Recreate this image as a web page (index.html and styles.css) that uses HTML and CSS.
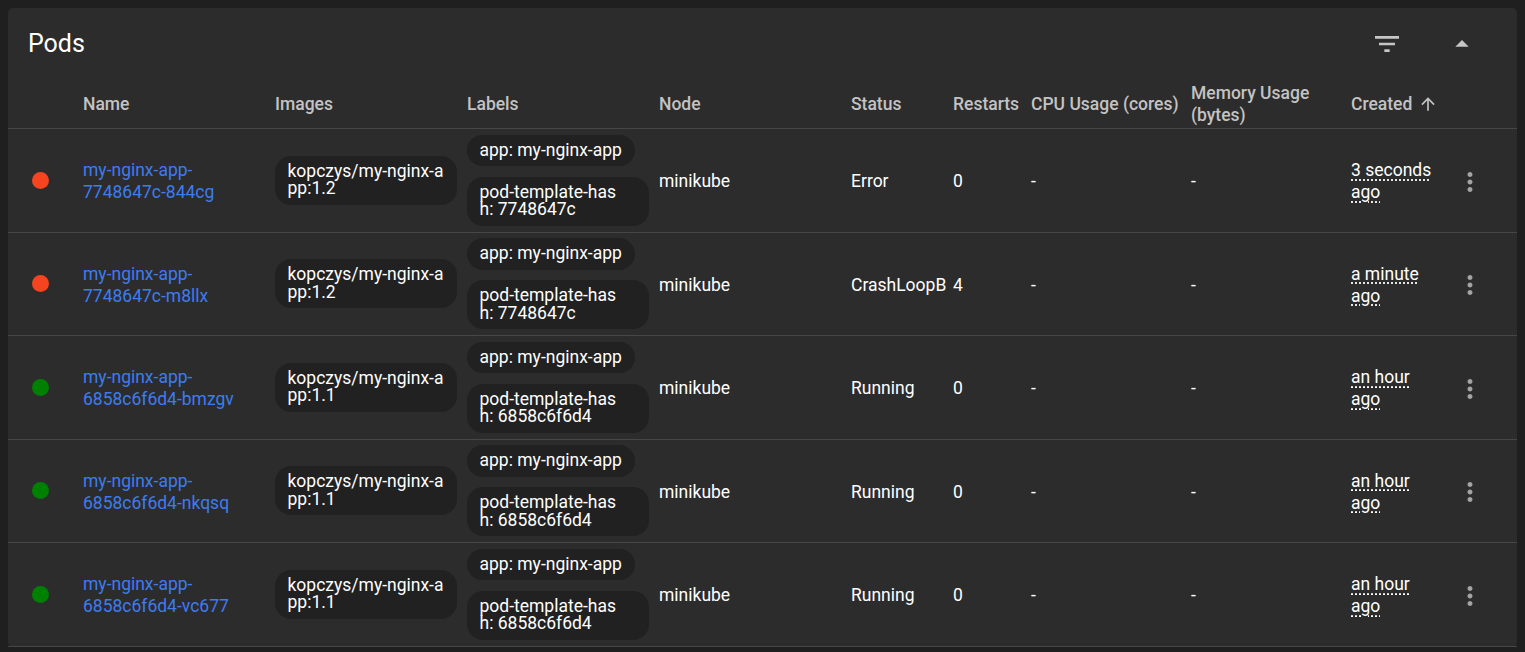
FILE: index.html
```html
<!DOCTYPE html>
<html lang="en">
<head>
<meta charset="utf-8">
<title>Pods</title>
<link rel="stylesheet" href="styles.css">
</head>
<body>
<section class="card">
  <header class="card-head">
    <h1 class="title">Pods</h1>
    <div class="head-actions">
      <button class="icon-btn" aria-label="Filter">
        <svg viewBox="0 0 24 24" width="32" height="32"><path fill="currentColor" d="M10 18h4v-2h-4v2zM3 6v2h18V6H3zm3 7h12v-2H6v2z"/></svg>
      </button>
      <button class="icon-btn" aria-label="Collapse">
        <svg viewBox="0 0 24 24" width="32" height="32"><path fill="currentColor" d="M7 14l5-5 5 5z"/></svg>
      </button>
    </div>
  </header>

  <div class="table">
    <div class="row row--head">
      <div class="cell"></div>
      <div class="cell">Name</div>
      <div class="cell">Images</div>
      <div class="cell">Labels</div>
      <div class="cell">Node</div>
      <div class="cell">Status</div>
      <div class="cell">Restarts</div>
      <div class="cell">CPU Usage (cores)</div>
      <div class="cell cell--wrap">Memory Usage (bytes)</div>
      <div class="cell cell--sort">Created
        <svg class="sort-icon" viewBox="0 0 24 24" width="20" height="20"><path fill="currentColor" d="M4 12l1.41 1.41L11 7.83V20h2V7.83l5.58 5.59L20 12l-8-8-8 8z"/></svg>
      </div>
      <div class="cell"></div>
    </div>

    <div class="row">
      <div class="cell cell--dot"><span class="dot dot--error"></span></div>
      <div class="cell cell--text cell--name"><a class="link" href="#">my-nginx-app-7748647c-844cg</a></div>
      <div class="cell"><span class="chip chip--image">kopczys/my-nginx-app:1.2</span></div>
      <div class="cell cell--labels"><span class="chip">app: my-nginx-app</span><span class="chip chip--hash">pod-template-hash: 7748647c</span></div>
      <div class="cell cell--text">minikube</div>
      <div class="cell cell--text cell--status">Error</div>
      <div class="cell cell--text">0</div>
      <div class="cell cell--text">-</div>
      <div class="cell cell--text">-</div>
      <div class="cell cell--text cell--created"><span class="time">3 seconds ago</span></div>
      <div class="cell cell--action"><button class="icon-btn kebab" aria-label="More"><svg viewBox="0 0 24 24" width="30" height="30"><path fill="currentColor" d="M12 8c1.1 0 2-.9 2-2s-.9-2-2-2-2 .9-2 2 .9 2 2 2zm0 2c-1.1 0-2 .9-2 2s.9 2 2 2 2-.9 2-2-.9-2-2-2zm0 6c-1.1 0-2 .9-2 2s.9 2 2 2 2-.9 2-2-.9-2-2-2z"/></svg></button></div>
    </div>

    <div class="row">
      <div class="cell cell--dot"><span class="dot dot--error"></span></div>
      <div class="cell cell--text cell--name"><a class="link" href="#">my-nginx-app-7748647c-m8llx</a></div>
      <div class="cell"><span class="chip chip--image">kopczys/my-nginx-app:1.2</span></div>
      <div class="cell cell--labels"><span class="chip">app: my-nginx-app</span><span class="chip chip--hash">pod-template-hash: 7748647c</span></div>
      <div class="cell cell--text">minikube</div>
      <div class="cell cell--text cell--status">CrashLoopBackOff</div>
      <div class="cell cell--text">4</div>
      <div class="cell cell--text">-</div>
      <div class="cell cell--text">-</div>
      <div class="cell cell--text cell--created"><span class="time">a minute ago</span></div>
      <div class="cell cell--action"><button class="icon-btn kebab" aria-label="More"><svg viewBox="0 0 24 24" width="30" height="30"><path fill="currentColor" d="M12 8c1.1 0 2-.9 2-2s-.9-2-2-2-2 .9-2 2 .9 2 2 2zm0 2c-1.1 0-2 .9-2 2s.9 2 2 2 2-.9 2-2-.9-2-2-2zm0 6c-1.1 0-2 .9-2 2s.9 2 2 2 2-.9 2-2-.9-2-2-2z"/></svg></button></div>
    </div>

    <div class="row">
      <div class="cell cell--dot"><span class="dot dot--ok"></span></div>
      <div class="cell cell--text cell--name"><a class="link" href="#">my-nginx-app-6858c6f6d4-bmzgv</a></div>
      <div class="cell"><span class="chip chip--image">kopczys/my-nginx-app:1.1</span></div>
      <div class="cell cell--labels"><span class="chip">app: my-nginx-app</span><span class="chip chip--hash">pod-template-hash: 6858c6f6d4</span></div>
      <div class="cell cell--text">minikube</div>
      <div class="cell cell--text cell--status">Running</div>
      <div class="cell cell--text">0</div>
      <div class="cell cell--text">-</div>
      <div class="cell cell--text">-</div>
      <div class="cell cell--text cell--created"><span class="time">an hour ago</span></div>
      <div class="cell cell--action"><button class="icon-btn kebab" aria-label="More"><svg viewBox="0 0 24 24" width="30" height="30"><path fill="currentColor" d="M12 8c1.1 0 2-.9 2-2s-.9-2-2-2-2 .9-2 2 .9 2 2 2zm0 2c-1.1 0-2 .9-2 2s.9 2 2 2 2-.9 2-2-.9-2-2-2zm0 6c-1.1 0-2 .9-2 2s.9 2 2 2 2-.9 2-2-.9-2-2-2z"/></svg></button></div>
    </div>

    <div class="row">
      <div class="cell cell--dot"><span class="dot dot--ok"></span></div>
      <div class="cell cell--text cell--name"><a class="link" href="#">my-nginx-app-6858c6f6d4-nkqsq</a></div>
      <div class="cell"><span class="chip chip--image">kopczys/my-nginx-app:1.1</span></div>
      <div class="cell cell--labels"><span class="chip">app: my-nginx-app</span><span class="chip chip--hash">pod-template-hash: 6858c6f6d4</span></div>
      <div class="cell cell--text">minikube</div>
      <div class="cell cell--text cell--status">Running</div>
      <div class="cell cell--text">0</div>
      <div class="cell cell--text">-</div>
      <div class="cell cell--text">-</div>
      <div class="cell cell--text cell--created"><span class="time">an hour ago</span></div>
      <div class="cell cell--action"><button class="icon-btn kebab" aria-label="More"><svg viewBox="0 0 24 24" width="30" height="30"><path fill="currentColor" d="M12 8c1.1 0 2-.9 2-2s-.9-2-2-2-2 .9-2 2 .9 2 2 2zm0 2c-1.1 0-2 .9-2 2s.9 2 2 2 2-.9 2-2-.9-2-2-2zm0 6c-1.1 0-2 .9-2 2s.9 2 2 2 2-.9 2-2-.9-2-2-2z"/></svg></button></div>
    </div>

    <div class="row">
      <div class="cell cell--dot"><span class="dot dot--ok"></span></div>
      <div class="cell cell--text cell--name"><a class="link" href="#">my-nginx-app-6858c6f6d4-vc677</a></div>
      <div class="cell"><span class="chip chip--image">kopczys/my-nginx-app:1.1</span></div>
      <div class="cell cell--labels"><span class="chip">app: my-nginx-app</span><span class="chip chip--hash">pod-template-hash: 6858c6f6d4</span></div>
      <div class="cell cell--text">minikube</div>
      <div class="cell cell--text cell--status">Running</div>
      <div class="cell cell--text">0</div>
      <div class="cell cell--text">-</div>
      <div class="cell cell--text">-</div>
      <div class="cell cell--text cell--created"><span class="time">an hour ago</span></div>
      <div class="cell cell--action"><button class="icon-btn kebab" aria-label="More"><svg viewBox="0 0 24 24" width="30" height="30"><path fill="currentColor" d="M12 8c1.1 0 2-.9 2-2s-.9-2-2-2-2 .9-2 2 .9 2 2 2zm0 2c-1.1 0-2 .9-2 2s.9 2 2 2 2-.9 2-2-.9-2-2-2zm0 6c-1.1 0-2 .9-2 2s.9 2 2 2 2-.9 2-2-.9-2-2-2z"/></svg></button></div>
    </div>
  </div>
</section>
</body>
</html>
```

FILE: styles.css
```css
* { box-sizing: border-box; }

html, body {
  margin: 0;
  padding: 0;
}

body {
  background: #1f1f1f;
  padding: 8px;
  font-family: Roboto, "Liberation Sans", Arial, sans-serif;
  font-size: 17.5px;
  color: #ffffff;
  overflow: hidden;
}

.card {
  background: #2c2c2c;
  border-radius: 5px;
}

.card-head {
  height: 70px;
  display: flex;
  align-items: center;
  justify-content: space-between;
  padding: 0 39px 0 20px;
}

.title {
  margin: 0;
  padding-top: 2px;
  font-size: 25px;
  font-weight: 400;
  line-height: 1.2;
  color: #ffffff;
}

.head-actions {
  display: flex;
  align-items: center;
  gap: 43px;
  color: #c6c6c6;
  padding-top: 2px;
}

.icon-btn {
  background: none;
  border: 0;
  padding: 0;
  margin: 0;
  color: inherit;
  display: flex;
  align-items: center;
  justify-content: center;
  cursor: pointer;
}

.icon-btn svg { display: block; }

.row {
  display: grid;
  grid-template-columns: 75px 192px 192px 192px 192px 102px 78px 160px 160px 104px 1fr;
  align-items: center;
  border-bottom: 1px solid #474747;
  padding: 5.75px 0;
  line-height: 1.25;
}

.row--head {
  height: 51px;
  padding: 4px 0 0;
  font-weight: 500;
  color: #c3c3c3;
}

.cell {
  min-width: 0;
}

.cell--text {
  padding-top: 4px;
}

.cell--action {
  padding-top: 3px;
}

.cell--sort {
  display: flex;
  align-items: center;
}

.sort-icon {
  margin-left: 6px;
  margin-top: -2px;
}

.cell--dot {
  padding-left: 24px;
  display: flex;
  align-items: center;
}

.dot {
  width: 17px;
  height: 17px;
  border-radius: 50%;
  display: block;
}

.dot--error { background: #f5441f; }
.dot--ok { background: #008000; }

.cell--name {
  padding-right: 22px;
}

.link {
  color: #3d7cf0;
  text-decoration: none;
}

.chip {
  display: inline-block;
  max-width: 182px;
  background: #212121;
  border-radius: 16px;
  padding: 7px 11px 7px 12.5px;
  line-height: 17.5px;
  word-break: break-all;
  color: #ffffff;
}

.cell--labels {
  display: flex;
  flex-direction: column;
  align-items: flex-start;
  gap: 10.5px;
}

.cell--labels .chip {
  padding: 7px 13px 7px 12.5px;
}

.cell--labels .chip--hash {
  padding-right: 28px;
}

.cell--status {
  overflow: hidden;
  white-space: nowrap;
  margin-right: 7px;
}

.cell--created {
  padding-right: 20px;
}

.time {
  text-decoration: underline dotted;
  text-underline-offset: 3px;
}

.kebab {
  color: #a4a4a4;
}
```
